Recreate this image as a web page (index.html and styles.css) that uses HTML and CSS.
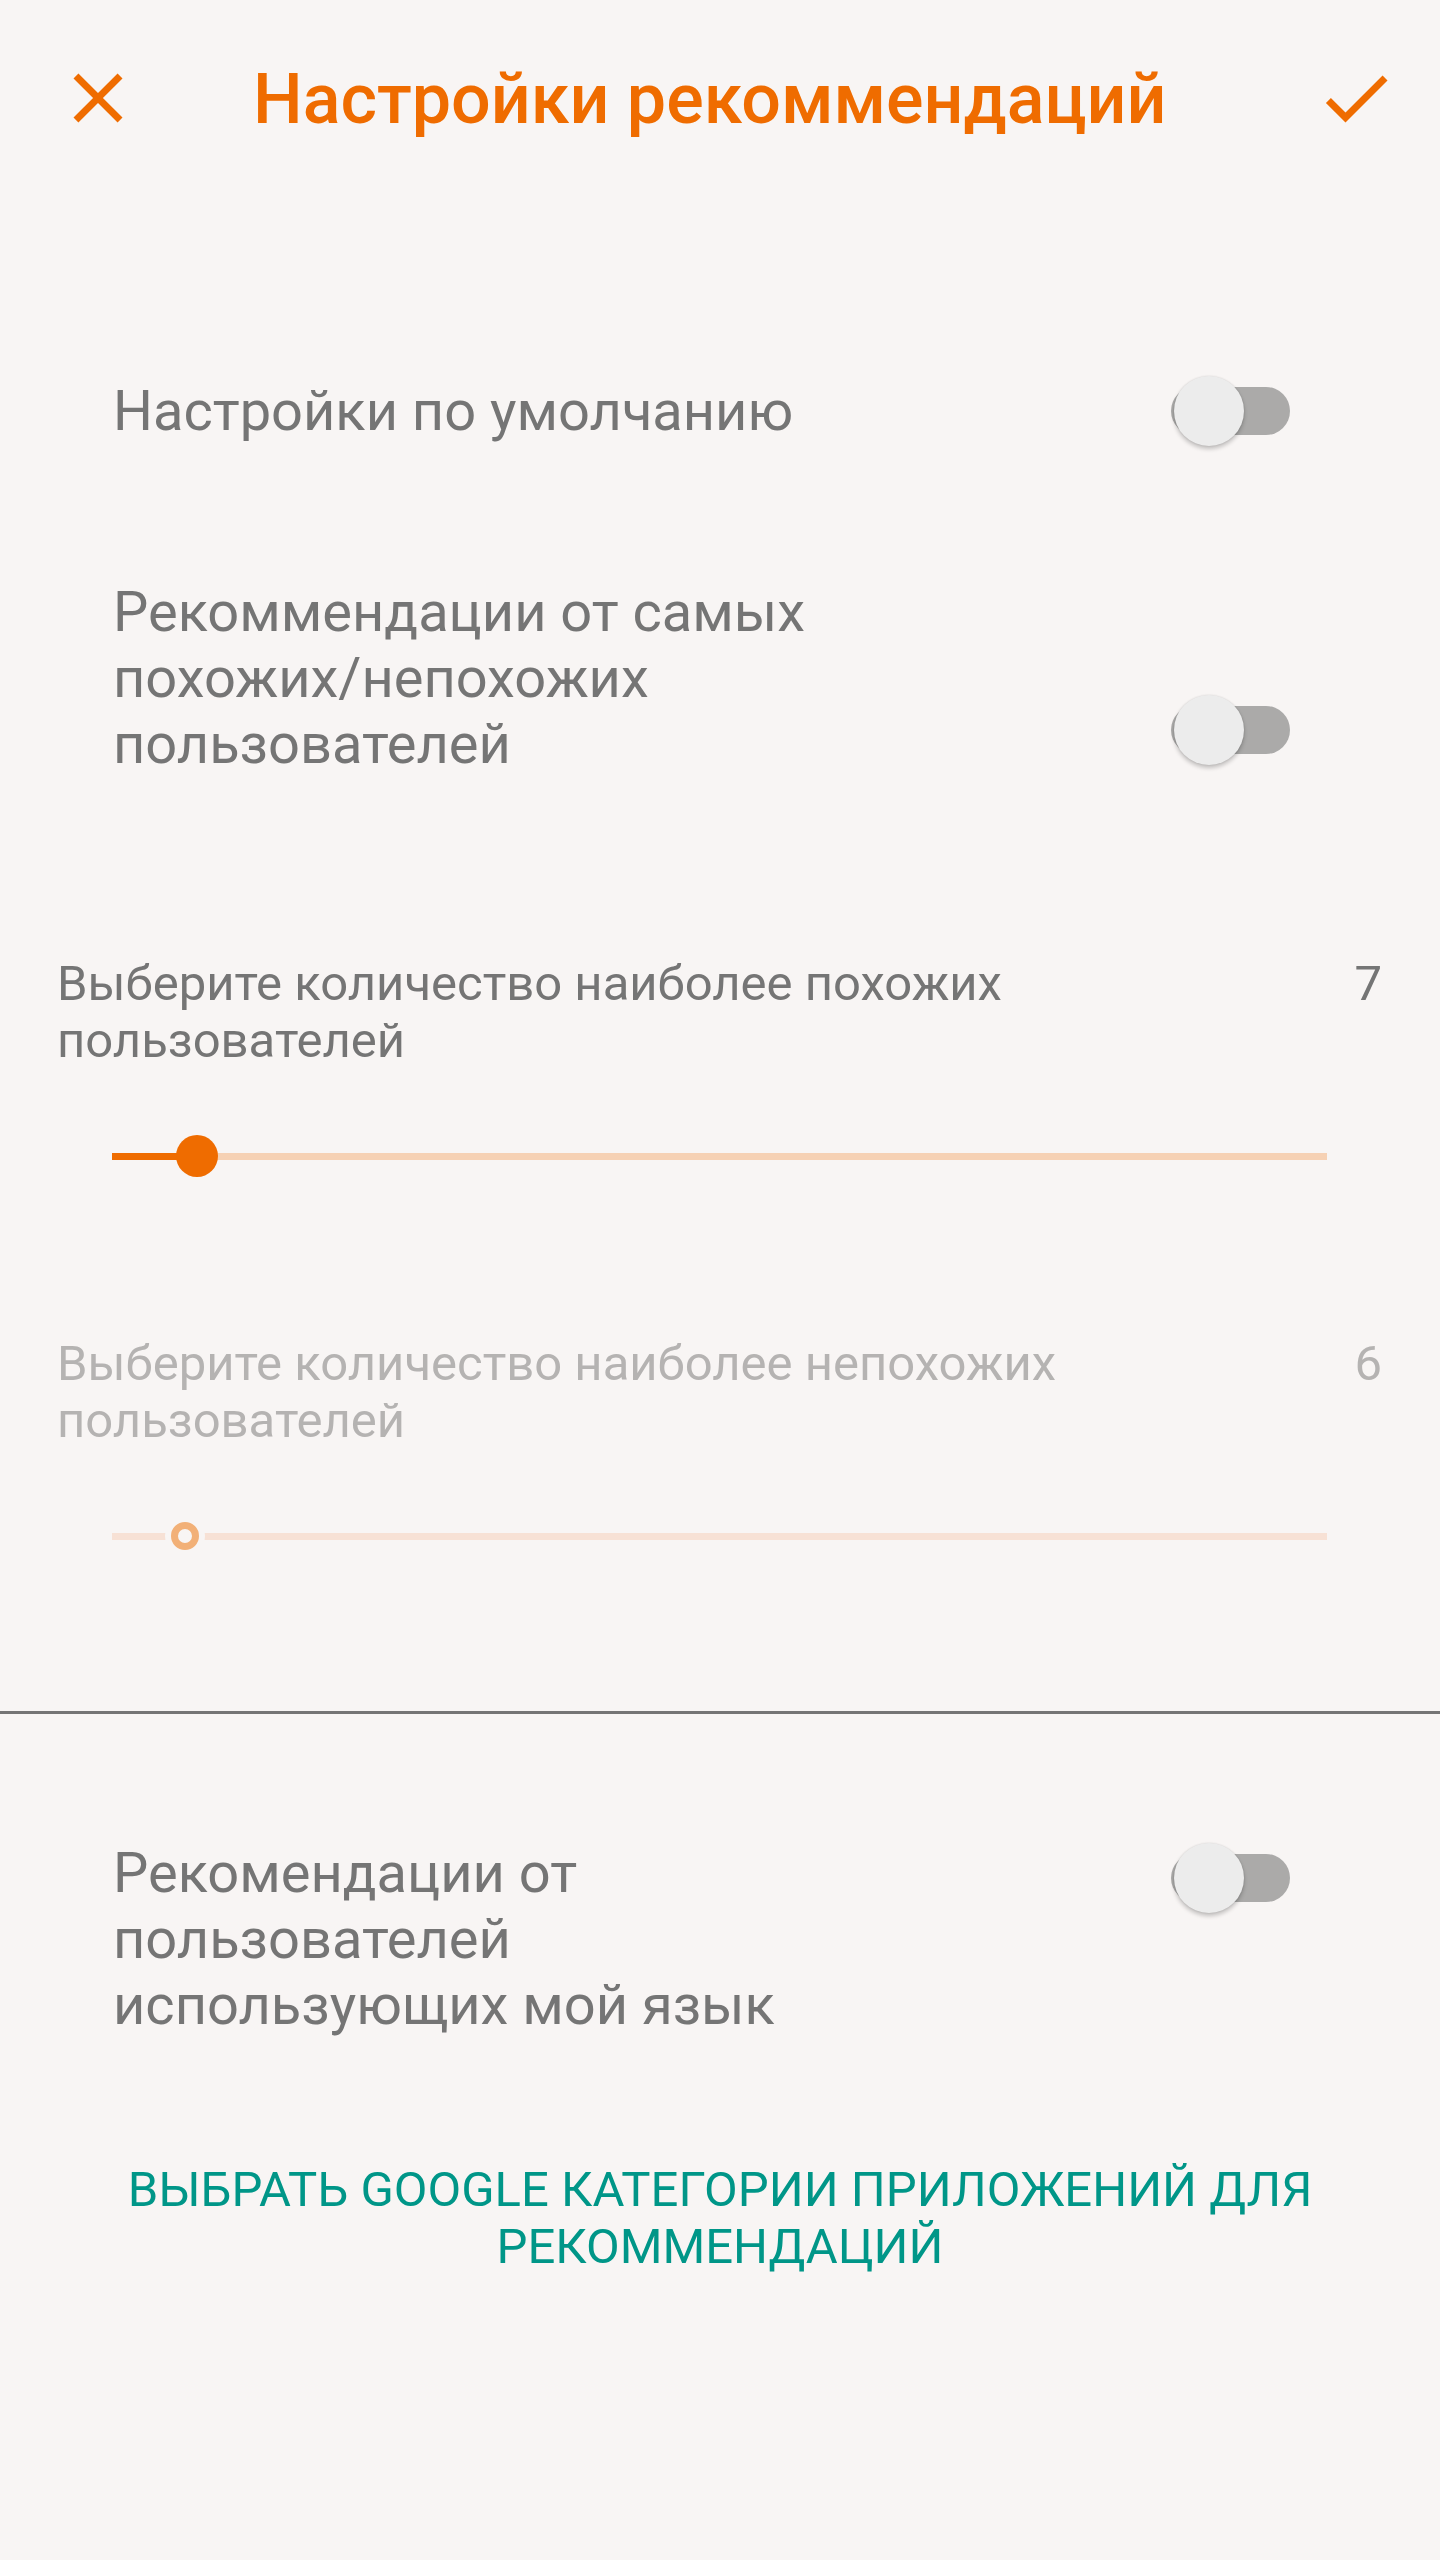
FILE: index.html
```html
<!DOCTYPE html>
<html lang="ru">
<head>
    <meta charset="UTF-8">
    <meta name="viewport" content="width=device-width, initial-scale=1.0">
    <title>Настройки рекоммендаций</title>
    <link rel="stylesheet" href="styles.css">
</head>
<body>

    <div class="screen">

        <!-- Toolbar -->
        <header class="toolbar">
            <button class="icon-btn close-btn" aria-label="Закрыть">
                <svg viewBox="0 0 24 24" width="84" height="84">
                    <path d="M19 6.41L17.59 5 12 10.59 6.41 5 5 6.41 10.59 12 5 17.59 6.41 19 12 13.41 17.59 19 19 17.59 13.41 12z"/>
                </svg>
            </button>
            <h1 class="toolbar-title">Настройки рекоммендаций</h1>
            <button class="icon-btn done-btn" aria-label="Готово">
                <svg viewBox="0 0 24 24" width="84" height="84">
                    <path d="M9 16.17L4.83 12l-1.42 1.41L9 19 21 7l-1.41-1.41z"/>
                </svg>
            </button>
        </header>

        <!-- Switches -->
        <div class="switch-row row-default">
            <span class="switch-label">Настройки по умолчанию</span>
            <span class="switch"><span class="switch-track"></span><span class="switch-thumb"></span></span>
        </div>

        <div class="switch-row row-similar">
            <span class="switch-label">Рекоммендации от самых похожих/непохожих пользователей</span>
            <span class="switch"><span class="switch-track"></span><span class="switch-thumb"></span></span>
        </div>

        <!-- Sliders -->
        <div class="slider-block first-slider">
            <div class="slider-head">
                <span class="slider-label">Выберите количество наиболее похожих пользователей</span>
                <span class="slider-value">7</span>
            </div>
            <div class="slider">
                <div class="slider-track"><div class="slider-fill" style="width: 7%;"></div></div>
                <div class="slider-thumb" style="left: 7%;"></div>
            </div>
        </div>

        <div class="slider-block second-slider disabled">
            <div class="slider-head">
                <span class="slider-label">Выберите количество наиболее непохожих пользователей</span>
                <span class="slider-value">6</span>
            </div>
            <div class="slider">
                <div class="slider-track"><div class="slider-fill" style="width: 6%;"></div></div>
                <div class="slider-thumb" style="left: 6%;"></div>
            </div>
        </div>

        <hr class="divider">

        <div class="switch-row row-language">
            <span class="switch-label">Рекомендации от пользователей использующих мой язык</span>
            <span class="switch"><span class="switch-track"></span><span class="switch-thumb"></span></span>
        </div>

        <button class="link-btn">ВЫБРАТЬ GOOGLE КАТЕГОРИИ ПРИЛОЖЕНИЙ ДЛЯ РЕКОММЕНДАЦИЙ</button>

    </div>

</body>
</html>
```

FILE: styles.css
```css
body {
    font-family: Roboto, "Noto Sans", Arial, sans-serif;
    background-color: #f8f5f4;
    margin: 0;
    padding: 0;
}

.screen {
    width: 1440px;
    min-height: 2560px;
    display: flex;
    flex-direction: column;
}

/* Toolbar */
.toolbar {
    display: flex;
    align-items: flex-start;
    padding-top: 56px;
}

.icon-btn {
    width: 84px;
    height: 84px;
    padding: 0;
    border: none;
    background: none;
    flex-shrink: 0;
    cursor: pointer;
}

.icon-btn svg {
    display: block;
    fill: #ef6c00;
}

.close-btn {
    margin-left: 56px;
}

.done-btn {
    margin-left: auto;
    margin-right: 42px;
}

.toolbar-title {
    margin: 2px 0 0 113px;
    font-size: 70px;
    line-height: 82px;
    font-weight: 500;
    color: #ef6c00;
    white-space: nowrap;
}

/* Switch rows */
.switch-row {
    display: flex;
    justify-content: space-between;
    align-items: center;
    padding: 0 150px 0 113px;
}

.switch-label {
    max-width: 780px;
    font-size: 56px;
    line-height: 66px;
    color: #757575;
}

.row-default {
    margin-top: 235px;
}

.row-similar {
    margin-top: 132px;
}

.row-similar .switch {
    align-self: flex-end;
    margin-bottom: 11px;
}

.row-language {
    margin-top: 126px;
}

.row-language .switch {
    align-self: flex-start;
    margin-top: 2px;
}

.switch {
    position: relative;
    display: flex;
    align-items: center;
    width: 119px;
    height: 72px;
    flex-shrink: 0;
}

.switch-track {
    width: 100%;
    height: 48px;
    border-radius: 24px;
    background-color: #abaaa9;
}

.switch-thumb {
    position: absolute;
    left: 3px;
    top: 1px;
    width: 70px;
    height: 70px;
    border-radius: 50%;
    background-color: #ececec;
    box-shadow: 0 3px 4px rgba(0, 0, 0, 0.22), 0 0 2px rgba(0, 0, 0, 0.12);
}

/* Sliders */
.slider-block {
    padding: 0 58px 0 57px;
}

.first-slider {
    margin-top: 178px;
}

.second-slider {
    margin-top: 158px;
}

.slider-head {
    display: flex;
    justify-content: space-between;
    align-items: flex-start;
    font-size: 49px;
    line-height: 57px;
    color: #757575;
}

.slider-label {
    flex: 1;
    margin-right: 40px;
}

.slider {
    position: relative;
    display: flex;
    align-items: center;
    height: 42px;
    margin: 66px 55px 0;
}

.slider-track {
    width: 100%;
    height: 7px;
    background-color: #f6d1b4;
}

.slider-fill {
    height: 100%;
    background-color: #ef6c00;
}

.slider-thumb {
    position: absolute;
    top: 0;
    width: 42px;
    height: 42px;
    margin-left: -21px;
    border-radius: 50%;
    background-color: #ef6c00;
}

.disabled .slider-head {
    color: #b5b3b2;
}

.disabled .slider-track,
.disabled .slider-fill {
    background-color: #f7e1d5;
}

.disabled .slider-thumb {
    top: 7px;
    width: 28px;
    height: 28px;
    margin-left: -14px;
    box-sizing: border-box;
    border: 7px solid #f2b077;
    background-color: #f8f5f4;
    box-shadow: 0 0 0 6px #f8f5f4;
}

.divider {
    margin: 154px 0 0;
    height: 3px;
    border: none;
    background-color: #757575;
}

/* Bottom text button */
.link-btn {
    margin: 123px 0 0;
    padding: 0 56px;
    border: none;
    background: none;
    font-family: Roboto, "Noto Sans", Arial, sans-serif;
    font-size: 49px;
    line-height: 57px;
    color: #009688;
    text-align: center;
    cursor: pointer;
}
```
